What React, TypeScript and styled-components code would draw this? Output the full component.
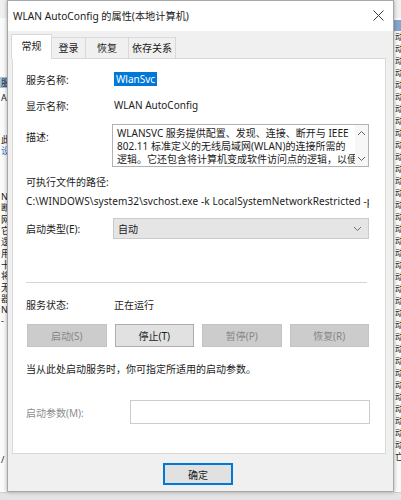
import React from 'react';
import styled, { createGlobalStyle } from 'styled-components';

const FONT = `"Noto Sans", "Noto Sans CJK SC", sans-serif`;

const GlobalStyle = createGlobalStyle`
  html, body {
    margin: 0;
    padding: 0;
    background: #e4e4e4;
  }
  body {
    font-family: ${FONT};
    font-size: 10px;
    color: #1b1b1b;
  }
`;

interface SideLine {
  text: string;
  gap?: number;
  selected?: boolean;
  link?: boolean;
}

// description column of the services window behind the dialog
const leftLines: SideLine[] = [
  { text: '服', gap: 59, selected: true },
  { text: 'AN', gap: 4 },
  { text: '此', gap: 30 },
  { text: '设', link: true },
  { text: 'N', gap: 35 },
  { text: '断' },
  { text: '网' },
  { text: '它' },
  { text: '逻' },
  { text: '用' },
  { text: '十' },
  { text: '将' },
  { text: '无' },
  { text: '器' },
  { text: 'N' },
  { text: '-' },
  { text: '/', gap: 127 },
];

const tabs = [
  { label: '常规', width: 41, active: true },
  { label: '登录', width: 35 },
  { label: '恢复', width: 44 },
  { label: '依存关系', width: 48 },
];

const controls = [
  { label: '启动(S)', disabled: true },
  { label: '停止(T)' },
  { label: '暂停(P)', disabled: true },
  { label: '恢复(R)', disabled: true },
];

const App: React.FC = () => {
  return (
    <>
      <GlobalStyle />
      <Desktop>
        <LeftPane>
          <PaneHeader />
          {leftLines.map((line, i) => (
            <LeftLine key={i} $gap={line.gap} $selected={line.selected} $link={line.link}>
              {line.text}
            </LeftLine>
          ))}
        </LeftPane>

        <Dialog>
          <TitleBar>
            <Title>WLAN AutoConfig 的属性(本地计算机)</Title>
            <CloseButton>
              <svg width="11" height="11" viewBox="0 0 11 11">
                <path d="M0.5 0.5 L10.5 10.5 M10.5 0.5 L0.5 10.5" stroke="#3a3a3a" strokeWidth="1" />
              </svg>
            </CloseButton>
          </TitleBar>

          <DialogBody>
            <TabStrip>
              {tabs.map((tab) => (
                <Tab key={tab.label} $width={tab.width} $active={tab.active}>
                  {tab.label}
                </Tab>
              ))}
            </TabStrip>

            <TabPanel>
              <InfoRow $top={12}>
                <Label>服务名称:</Label>
                <Value>
                  <Selected>WlanSvc</Selected>
                </Value>
              </InfoRow>
              <InfoRow $top={10}>
                <Label>显示名称:</Label>
                <Value>WLAN AutoConfig</Value>
              </InfoRow>

              <DescriptionRow>
                <Label>描述:</Label>
                <DescriptionBox>
                  <DescriptionText>
                    <span>WLANSVC 服务提供配置、发现、连接、断开与 IEEE</span>
                    <span>802.11 标准定义的无线局域网(WLAN)的连接所需的</span>
                    <span>逻辑。它还包含将计算机变成软件访问点的逻辑，以便其他设备</span>
                  </DescriptionText>
                  <ScrollBar>
                    <svg width="9" height="6" viewBox="0 0 9 6">
                      <path d="M1 5 L4.5 1.5 L8 5" fill="none" stroke="#606060" strokeWidth="1" />
                    </svg>
                    <svg width="9" height="6" viewBox="0 0 9 6">
                      <path d="M1 1 L4.5 4.5 L8 1" fill="none" stroke="#606060" strokeWidth="1" />
                    </svg>
                  </ScrollBar>
                </DescriptionBox>
              </DescriptionRow>

              <PlainLine $top={8}>可执行文件的路径:</PlainLine>
              <PathLine $top={5}>
                C:\WINDOWS\system32\svchost.exe -k LocalSystemNetworkRestricted -p
              </PathLine>

              <InfoRow $top={10}>
                <Label>启动类型(E):</Label>
                <Select>
                  <span>自动</span>
                  <svg width="9" height="6" viewBox="0 0 9 6">
                    <path d="M1 1 L4.5 4.5 L8 1" fill="none" stroke="#707070" strokeWidth="1" />
                  </svg>
                </Select>
              </InfoRow>

              <Separator />

              <InfoRow $top={13}>
                <Label>服务状态:</Label>
                <Value>正在运行</Value>
              </InfoRow>

              <ButtonRow>
                {controls.map((c) => (
                  <ControlButton key={c.label} $disabled={c.disabled}>
                    {c.label}
                  </ControlButton>
                ))}
              </ButtonRow>

              <PlainLine $top={15}>当从此处启动服务时，你可指定所适用的启动参数。</PlainLine>

              <ParamRow>
                <Label $disabled>启动参数(M):</Label>
                <ParamInput />
              </ParamRow>
            </TabPanel>

            <Footer>
              <OkButton>确定</OkButton>
            </Footer>
          </DialogBody>
        </Dialog>

        <RightPane>
          <PaneHeader />
          <ColumnHeader />
          {Array.from({ length: 36 }).map((_, i) => (
            <RightLine key={i}>{i === 35 ? '亡' : '动'}</RightLine>
          ))}
        </RightPane>
      </Desktop>
    </>
  );
};

const Desktop = styled.div`
  display: flex;
  width: 401px;
  height: 500px;
  overflow: hidden;
  background: #e4e4e4;
`;

const LeftPane = styled.div`
  flex: none;
  width: 7px;
  height: 492px;
  display: flex;
  flex-direction: column;
  overflow: hidden;
  background: #fbfbfb;
  border-bottom: 1px solid #cfcfcf;
`;

const PaneHeader = styled.div`
  flex: none;
  height: 18px;
  background: #f0f0f0;
`;

const LeftLine = styled.div<{ $gap?: number; $selected?: boolean; $link?: boolean }>`
  flex: none;
  height: 11.3px;
  margin-top: ${(p) => p.$gap ?? 0}px;
  padding-left: 1px;
  font-size: 9px;
  line-height: 11px;
  white-space: nowrap;
  overflow: hidden;
  color: ${(p) => (p.$link ? '#2a6fc4' : '#222')};
  background: ${(p) => (p.$selected ? '#9fc3e8' : 'transparent')};
`;

const Dialog = styled.div`
  flex: none;
  width: 387px;
  height: 492px;
  box-sizing: border-box;
  display: flex;
  flex-direction: column;
  background: #f0f0f0;
  border: 1px solid #a8a8a8;
  box-shadow: 0 0 4px rgba(0, 0, 0, 0.35);
  position: relative;
  z-index: 1;
`;

const TitleBar = styled.div`
  flex: none;
  height: 28px;
  display: flex;
  align-items: center;
  justify-content: space-between;
  background: #fff;
  padding: 0 8px 2px 5px;
`;

const Title = styled.div`
  font-size: 10.2px;
  color: #1a1a1a;
  white-space: nowrap;
`;

const CloseButton = styled.div`
  display: flex;
  align-items: center;
  justify-content: center;
  width: 14px;
  height: 14px;
`;

const DialogBody = styled.div`
  flex: 1;
  display: flex;
  flex-direction: column;
  padding-top: 4px;
`;

const TabStrip = styled.div`
  display: flex;
  align-items: flex-end;
  height: 24px;
  padding-left: 4px;
  position: relative;
  z-index: 1;
`;

const Tab = styled.div<{ $width: number; $active?: boolean }>`
  flex: none;
  box-sizing: border-box;
  width: ${(p) => p.$width}px;
  height: ${(p) => (p.$active ? 25 : 22)}px;
  display: flex;
  align-items: center;
  justify-content: center;
  padding-bottom: ${(p) => (p.$active ? 3 : 1)}px;
  background: ${(p) => (p.$active ? '#fff' : '#f0f0f0')};
  border: 1px solid #d9d9d9;
  border-bottom: ${(p) => (p.$active ? 'none' : '1px solid #d9d9d9')};
  margin-left: -1px;
  font-size: 10px;
  color: #1b1b1b;
  white-space: nowrap;
`;

const TabPanel = styled.div`
  flex: none;
  box-sizing: border-box;
  height: 396px;
  margin: -1px 7px 0 4px;
  padding-left: 13px;
  display: flex;
  flex-direction: column;
  background: #fff;
  border: 1px solid #d9d9d9;
`;

const InfoRow = styled.div<{ $top: number }>`
  display: grid;
  grid-template-columns: 88px auto;
  align-items: center;
  min-height: 16px;
  margin-top: ${(p) => p.$top}px;
`;

const Label = styled.div<{ $disabled?: boolean }>`
  font-size: 10px;
  white-space: nowrap;
  color: ${(p) => (p.$disabled ? '#8d8d8d' : '#1b1b1b')};
`;

const Value = styled.div`
  font-size: 10px;
  white-space: nowrap;
`;

const Selected = styled.span`
  display: inline-block;
  padding: 0 2px;
  line-height: 14px;
  background: #0078d7;
  color: #fff;
`;

const DescriptionRow = styled.div`
  display: grid;
  grid-template-columns: 86px 257px;
  margin-top: 11px;

  & > ${Label} {
    padding-top: 5px;
  }
`;

const DescriptionBox = styled.div`
  box-sizing: border-box;
  height: 43px;
  display: flex;
  border: 1px solid #b2b2b2;
  overflow: hidden;
`;

const DescriptionText = styled.div`
  flex: 1;
  display: flex;
  flex-direction: column;
  padding: 2px 0 0 4px;
  overflow: hidden;

  & > span {
    white-space: nowrap;
    font-size: 10px;
    line-height: 13px;
  }
`;

const ScrollBar = styled.div`
  flex: none;
  width: 13px;
  display: flex;
  flex-direction: column;
  align-items: center;
  justify-content: space-between;
  padding: 5px 0 4px;
  background: #f7f7f7;
`;

const PlainLine = styled.div<{ $top: number }>`
  margin-top: ${(p) => p.$top}px;
  font-size: 10px;
  line-height: 14px;
  white-space: nowrap;
  overflow: hidden;
  width: 347px;
`;

const PathLine = styled(PlainLine)`
  width: 343px;
  letter-spacing: 0.1px;
`;

const Select = styled.div`
  box-sizing: border-box;
  width: 256px;
  height: 21px;
  margin-left: -1px;
  display: flex;
  align-items: center;
  justify-content: space-between;
  padding: 0 6px 0 4px;
  background: #e5e5e5;
  border: 1px solid #cacaca;
  font-size: 10px;
`;

const Separator = styled.div`
  width: 341px;
  height: 1px;
  margin-top: 43px;
  background: #d4d4d4;
`;

const ButtonRow = styled.div`
  display: grid;
  grid-template-columns: repeat(4, 79.5px);
  column-gap: 8px;
  margin-top: 12px;
  margin-left: 1px;
`;

const ControlButton = styled.div<{ $disabled?: boolean }>`
  box-sizing: border-box;
  height: 23px;
  display: flex;
  align-items: center;
  justify-content: center;
  font-size: 10px;
  background: ${(p) => (p.$disabled ? '#cccccc' : '#e1e1e1')};
  border: 1px solid ${(p) => (p.$disabled ? '#c4c4c4' : '#adadad')};
  color: ${(p) => (p.$disabled ? '#878787' : '#1b1b1b')};
`;

const ParamRow = styled.div`
  display: grid;
  grid-template-columns: 104px 240px;
  align-items: center;
  margin-top: 24px;
`;

const ParamInput = styled.div`
  box-sizing: border-box;
  height: 24px;
  background: #fff;
  border: 1px solid #cccccc;
`;

const Footer = styled.div`
  flex: 1;
  display: flex;
  align-items: flex-start;
  padding: 9px 0 0 155px;
`;

const OkButton = styled.div`
  box-sizing: border-box;
  width: 70px;
  height: 22px;
  display: flex;
  align-items: center;
  justify-content: center;
  font-size: 10px;
  background: #e1e1e1;
  border: 2px solid #0078d7;
  color: #1b1b1b;
`;

const RightPane = styled.div`
  flex: none;
  width: 7px;
  height: 492px;
  display: flex;
  flex-direction: column;
  overflow: hidden;
  background: #fafafa;
  border-bottom: 1px solid #cfcfcf;
`;

const ColumnHeader = styled.div`
  flex: none;
  height: 11px;
  margin-top: 2px;
  background: #86a6cf;
`;

const RightLine = styled.div`
  flex: none;
  height: 12px;
  padding-left: 1px;
  font-size: 9px;
  line-height: 12px;
  color: #2a2a2a;
  white-space: nowrap;
  overflow: hidden;
`;

export default App;
